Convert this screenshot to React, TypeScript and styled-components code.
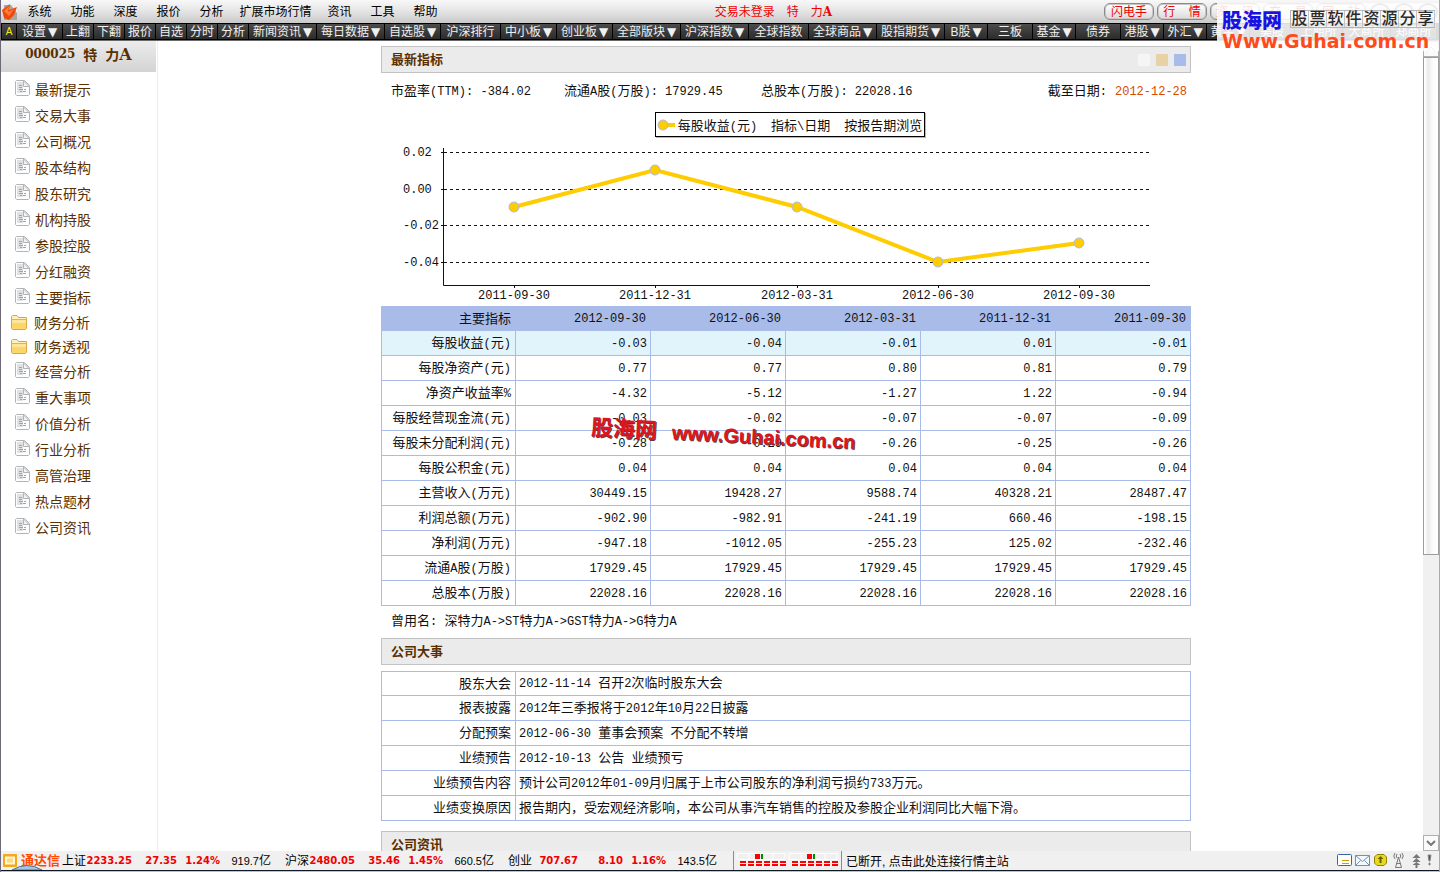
import React from 'react';
import styled, { createGlobalStyle } from 'styled-components';

const cjk = '"Liberation Sans", "Noto Sans CJK SC", sans-serif';
const mono = '"Liberation Mono", "Noto Sans CJK SC", monospace';

const GlobalStyle = createGlobalStyle`
  * { box-sizing: border-box; }
  body { margin: 0; background: #fff; font-family: ${cjk}; font-size: 12px; color: #111; }
  button { font: inherit; color: inherit; padding: 0; border: 0; background: none; cursor: pointer; white-space: nowrap; }
  a { color: inherit; text-decoration: none; }
`;

const Shell = styled.div`
  position: relative;
  display: flex;
  flex-direction: column;
  height: 100vh;
  overflow: hidden;
  border-left: 1px solid #6f6878;
  border-right: 1px solid #a9a9b4;
`;

/* ---------- menu bar ---------- */
const MenuBar = styled.header`
  flex: none;
  display: flex;
  align-items: center;
  height: 23px;
  padding-left: 1px;
  background: linear-gradient(#f8f8f8, #e4e4e4 50%, #c9c9c9);
`;
const Logo = styled.svg`
  flex: none;
  width: 16px;
  height: 18px;
`;
const Menu = styled.nav`
  display: flex;
`;
const MenuItem = styled.button<{ $wide?: boolean }>`
  width: ${(p) => (p.$wide ? 85 : 43)}px;
  line-height: 20px;
  color: #000;
`;
const Title = styled.div`
  flex: 1;
  display: flex;
  justify-content: center;
  gap: 12px;
  padding-right: 4px;
  line-height: 20px;
  color: #f00000;
`;
const SerifA = styled.span<{ $size: number }>`
  font-family: "DejaVu Serif", serif;
  font-weight: bold;
  font-size: ${(p) => p.$size}px;
`;
const PillRow = styled.div`
  display: flex;
  gap: 3px;
  margin-right: 4px;
`;
const Pill = styled.button`
  && {
    width: 50px;
    height: 17px;
    line-height: 14px;
    border: 1px solid #8a8a8a;
    border-radius: 6px;
    background: linear-gradient(#fff, #dadada);
    box-shadow: inset 0 0 0 1px #c8c8c8;
    color: #f00000;
    white-space: pre;
  }
`;
const RoundRow = styled.div`
  display: flex;
  gap: 4px;
  width: 69px;
`;
const Round = styled.button`
  && {
    width: 20px;
    height: 18px;
    border: 2px solid #777;
    border-radius: 50%;
    line-height: 12px;
  }
`;

/* ---------- tool bar ---------- */
const ToolBar = styled.nav`
  flex: none;
  display: flex;
  height: 18px;
  padding: 1px 0 1px 1px;
  background: #000;
  border-bottom: 1px solid #6a6a6a;
`;
const Tool = styled.button<{ $w: number; $hot?: boolean }>`
  && {
    flex: none;
    width: ${(p) => p.$w}px;
    height: 15px;
    line-height: 16px;
    border-right: 1px solid #000;
    background: linear-gradient(#4c4c4c, #2b2b2b);
    color: ${(p) => (p.$hot ? '#f4f000' : '#f0f0f0')};
    font-size: ${(p) => (p.$hot ? 10 : 12)}px;
  }
`;
const Arrow = styled.span`
  margin-left: 2px;
  font-family: "DejaVu Sans", sans-serif;
  line-height: 12px;
`;

/* ---------- body ---------- */
const Body = styled.div`
  flex: 1;
  min-height: 0;
  display: flex;
`;
const Side = styled.aside`
  flex: none;
  width: 157px;
  border-right: 1px solid #ececec;
`;
const SideHead = styled.h1`
  margin: 0 1px 5px 0;
  height: 31px;
  display: flex;
  justify-content: center;
  align-items: center;
  gap: 8px;
  padding-bottom: 6px;
  font-size: 14px;
  background: linear-gradient(#ececec, #d3d3d3);
  color: #5a3000;
`;
const Code = styled.span`
  font-family: "DejaVu Serif", serif;
  font-size: 12px;
`;
const NavLink = styled.a<{ $folder?: boolean }>`
  display: flex;
  align-items: center;
  gap: ${(p) => (p.$folder ? 6 : 5)}px;
  height: ${(p) => (p.$folder ? 24 : 26)}px;
  padding-left: ${(p) => (p.$folder ? 10 : 14)}px;
  font-size: 14px;
  line-height: 20px;
  color: #5a3000;
  svg { flex: none; margin-bottom: ${(p) => (p.$folder ? 0 : 4)}px; }
`;
const Main = styled.main`
  flex: 1;
  min-width: 0;
  overflow: hidden;
  padding: 5px 9px 0 0;
`;
const Report = styled.div`
  position: relative;
  max-width: 810px;
  margin: 0 auto;
  font-size: 13px;
`;
const Mono = styled.span`
  font-family: ${mono};
  font-size: 12px;
  white-space: pre;
`;
const SectionBar = styled.div`
  display: flex;
  align-items: center;
  justify-content: space-between;
  height: 27px;
  padding: 0 4px 0 9px;
  border: 1px solid #c3c3c3;
  background: #ebebeb;
`;
const SectionTitle = styled.h2`
  margin: 0;
  padding-bottom: 2px;
  font-size: 13px;
  color: #5a3000;
`;
const Swatches = styled.div`
  display: flex;
  gap: 6px;
`;
const Swatch = styled.button<{ $c: string }>`
  && {
    width: 12px;
    height: 12px;
    background: ${(p) => p.$c};
  }
`;
const Facts = styled.div`
  display: flex;
  align-items: baseline;
  height: 37px;
  padding: 8px 4px 0 10px;
  line-height: 20px;
`;
const Fact = styled.div<{ $w: number }>`
  width: ${(p) => p.$w}px;
  white-space: nowrap;
`;
const AsOf = styled.div`
  display: flex;
  align-items: baseline;
  gap: 8px;
  margin-left: auto;
`;
const DateText = styled.span`
  color: #d94a00;
`;
const Legend = styled.div`
  display: flex;
  align-items: center;
  gap: 14px;
  width: fit-content;
  height: 25px;
  margin: 2px auto 1px;
  padding: 0 2px 0 1px;
  position: relative;
  left: 4px;
  border: 1px solid #000;
  box-shadow: 1px 1px 0 #b8b8b8;
  white-space: nowrap;
`;
const LegendKey = styled.span`
  display: flex;
  align-items: center;
  gap: 3px;
`;
const Chart = styled.svg`
  display: block;
  width: 100%;
  height: 168px;
  text { font-family: ${mono}; font-size: 12px; fill: #111; }
`;
const Table = styled.table`
  width: 100%;
  border-collapse: collapse;
  table-layout: fixed;
  th, td {
    height: 25px;
    padding: 0 3px;
    border: 1px solid #a9bbe8;
    line-height: 20px;
    font-weight: normal;
    text-align: right;
    white-space: nowrap;
  }
  tr:first-child > th:first-child { width: 134px; }
  th:first-child { padding-right: 4px; }
  thead th { height: 24px; background: #a9bbe8; padding-right: 4px; }
`;
const Row = styled.tr<{ $active?: boolean }>`
  background: ${(p) => (p.$active ? '#e1f3fb' : '#fff')};
`;
const EventTable = styled(Table)`
  margin: 6px 0 10px;
  td { text-align: left; }
  tr:first-child > th, tr:first-child > td { height: 24px; }
`;
const Former = styled.p`
  margin: 0;
  padding: 0 10px;
  height: 32px;
  line-height: 29px;
`;
const CenterMark = styled.div`
  position: absolute;
  left: 211px;
  top: 363px;
  display: flex;
  align-items: baseline;
  gap: 15px;
  transform: rotate(3deg);
  transform-origin: left top;
  color: #e0141c;
  font-weight: bold;
  font-size: 20px;
  text-shadow: 1px 1px 0 #5a3a3a;
  white-space: nowrap;
  pointer-events: none;
`;
const MarkName = styled.span`
  font-size: 22px;
`;
const Scroll = styled.div`
  flex: none;
  display: flex;
  flex-direction: column;
  width: 16px;
  background: #f0f0f0;
`;
const ScrollButton = styled.button`
  && {
    height: 16px;
    border: 1px solid #b0b0b0;
    background: #fafafa;
    line-height: 0;
  }
`;
const Track = styled.div`
  flex: 1;
`;
const Thumb = styled.div`
  height: 64%;
  border: 1px solid #9c9c9c;
  background: linear-gradient(90deg, #fff 1px, #eaeaea 4px, #fbfbfb 9px, #fff);
`;

/* ---------- status bar ---------- */
const Status = styled.footer`
  flex: none;
  position: relative;
  display: flex;
  align-items: center;
  height: 19px;
  padding-left: 2px;
  background: #f0f0f0;
  color: #000;
`;
const Brand = styled.button`
  && {
    display: flex;
    align-items: center;
    gap: 4px;
    width: 59px;
    font-size: 13px;
    line-height: 16px;
    font-weight: bold;
    color: #ff4a00;
  }
`;
const Quote = styled.div`
  display: grid;
  grid-template-columns: 24px 46px 45px 43px 51px;
  width: 223px;
  align-items: center;
  text-align: right;
  line-height: 18px;
  white-space: nowrap;
`;
const Up = styled.b`
  font-family: "DejaVu Sans", sans-serif;
  font-size: 10px;
  color: #f00000;
`;
const Num = styled.span`
  font-size: 11px;
`;
const Bars = styled.svg`
  flex: none;
  width: 109px;
  height: 19px;
  border-left: 1px solid #8c8c8c;
  border-right: 1px solid #8c8c8c;
  margin-left: 2px;
`;
const Conn = styled.a`
  margin-left: 4px;
  white-space: nowrap;
`;
const Tray = styled.svg`
  margin-left: auto;
  width: 102px;
  height: 19px;
`;
const TaskEdge = styled.svg`
  flex: none;
  width: 100%;
  height: 2px;
  background: #b4c3dc;
  border-top: 1px solid #111820;
`;
const Orb = styled.svg`
  position: absolute;
  left: 11px;
  bottom: 0;
  width: 30px;
  height: 5px;
`;

/* ---------- corner watermark ---------- */
const Corner = styled.div`
  position: absolute;
  top: 3px;
  right: -1px;
  width: 223px;
  height: 48px;
  padding: 5px 5px 0;
  background: rgba(255, 255, 255, 0.86);
  pointer-events: none;
  white-space: nowrap;
`;
const CornerTop = styled.div`
  display: flex;
  align-items: center;
  gap: 8px;
  height: 22px;
  font-size: 20px;
  font-weight: 900;
  color: #1a12e0;
`;
const CornerTag = styled.span`
  display: flex;
  height: 18px;
  border: 1px solid #b5b5b5;
  border-right: 0;
  font-size: 16px;
  font-weight: 500;
  line-height: 16px;
  color: #2a2a2a;
  span { width: 18px; text-align: center; border-right: 1px solid #c4c4c4; }
`;
const CornerUrl = styled.div`
  font-family: "DejaVu Sans", sans-serif;
  font-size: 19px;
  line-height: 22px;
  font-weight: bold;
  color: #ff4a1c;
`;

/* Half-width runs are set in the monospaced face, Chinese runs in the body face. */
const Mixed = ({ t }: { t: string }) => (
  <>
    {t.split(/([\x20-\x7e]+)/).map((s, i) => (i % 2 ? <Mono key={i}>{s}</Mono> : s))}
  </>
);

const menus = ['系统', '功能', '深度', '报价', '分析', '扩展市场行情', '资讯', '工具', '帮助'];
const tools: [string, number, boolean?][] = [
  ['设置', 46, true], ['上翻', 31], ['下翻', 31], ['报价', 31], ['自选', 31], ['分时', 31], ['分析', 31],
  ['新闻资讯', 68, true], ['每日数据', 68, true], ['自选股', 56, true], ['沪深排行', 60], ['中小板', 56, true],
  ['创业板', 56, true], ['全部版块', 68, true], ['沪深指数', 68, true], ['全球指数', 60], ['全球商品', 68, true],
  ['股指期货', 68, true], ['B股', 43, true], ['三板', 45], ['基金', 43, true], ['债券', 45], ['港股', 43, true],
  ['外汇', 43, true], ['黄金', 43, true], ['美股', 45], ['上期所', 48], ['大商所', 48], ['郑商所', 46],
];
const nav = ['最新提示', '交易大事', '公司概况', '股本结构', '股东研究', '机构持股', '参股控股', '分红融资', '主要指标',
  '财务分析', '财务透视', '经营分析', '重大事项', '价值分析', '行业分析', '高管治理', '热点题材', '公司资讯'];
const folders = ['财务分析', '财务透视'];
const dates = ['2012-09-30', '2012-06-30', '2012-03-31', '2011-12-31', '2011-09-30'];
const rows: [string, string[]][] = [
  ['每股收益(元)', ['-0.03', '-0.04', '-0.01', '0.01', '-0.01']],
  ['每股净资产(元)', ['0.77', '0.77', '0.80', '0.81', '0.79']],
  ['净资产收益率%', ['-4.32', '-5.12', '-1.27', '1.22', '-0.94']],
  ['每股经营现金流(元)', ['-0.03', '-0.02', '-0.07', '-0.07', '-0.09']],
  ['每股未分配利润(元)', ['-0.28', '-0.29', '-0.26', '-0.25', '-0.26']],
  ['每股公积金(元)', ['0.04', '0.04', '0.04', '0.04', '0.04']],
  ['主营收入(万元)', ['30449.15', '19428.27', '9588.74', '40328.21', '28487.47']],
  ['利润总额(万元)', ['-902.90', '-982.91', '-241.19', '660.46', '-198.15']],
  ['净利润(万元)', ['-947.18', '-1012.05', '-255.23', '125.02', '-232.46']],
  ['流通A股(万股)', ['17929.45', '17929.45', '17929.45', '17929.45', '17929.45']],
  ['总股本(万股)', ['22028.16', '22028.16', '22028.16', '22028.16', '22028.16']],
];
const events: [string, string][] = [
  ['股东大会', '2012-11-14 召开2次临时股东大会'],
  ['报表披露', '2012年三季报将于2012年10月22日披露'],
  ['分配预案', '2012-06-30 董事会预案 不分配不转增'],
  ['业绩预告', '2012-10-13 公告 业绩预亏'],
  ['业绩预告内容', '预计公司2012年01-09月归属于上市公司股东的净利润亏损约733万元。'],
  ['业绩变换原因', '报告期内，受宏观经济影响，本公司从事汽车销售的控股及参股企业利润同比大幅下滑。'],
];
const quotes = [
  ['上证', '2233.25', '27.35', '1.24%', '919.7'],
  ['沪深', '2480.05', '35.46', '1.45%', '660.5'],
  ['创业', '707.67', '8.10', '1.16%', '143.5'],
];
const points: [number, number, string][] = [
  [133, 69, '2011-09-30'], [274, 32, '2011-12-31'], [416, 69, '2012-03-31'], [557, 124, '2012-06-30'], [698, 105, '2012-09-30'],
];
const grid: [number, string][] = [[14, '0.02'], [51, '0.00'], [87, '-0.02'], [124, '-0.04']];

const PageIcon = () => (
  <svg width="15" height="16" viewBox="0 0 15 16">
    <path d="M1.500.5h8l5 5v9l-1 1h-12l-1-1v-13z" fill="#fdfdfd" stroke="#b4b4b4" strokeLinejoin="round" />
    <path d="M2 2h6v11H2z" fill="#dfe2e5" />
    <path d="M8.500 1v5.500H14z" fill="#f4f4f4" stroke="#b4b4b4" />
    <path d="M4 5.500h3M4 7.500h3M4 9.500h4M9 9.500h2M5 11.500h2M8 11.500h3" stroke="#a2a2a2" />
  </svg>
);
const FolderIcon = () => (
  <svg width="17" height="16" viewBox="0 0 17 16">
    <path d="M.5 13.500V1.500l1-1H6l1.500 2h8v11l-1 1h-13z" fill="#fff0b8" stroke="#dba54a" />
    <path d="M1 5h14v9H1z" fill="#fcd66a" />
    <path d="M1 5h14v3H1z" fill="#fee79a" />
    <path d="M.5 4.500h15" stroke="#e2b260" />
  </svg>
);

export default function App() {
  return (
    <>
      <GlobalStyle />
      <Shell>
        <MenuBar>
          <Logo viewBox="0 0 16 18">
            <path d="M2 2h13v15H2z" fill="#aaa6a4" />
            <path d="M9 2h6v8z" fill="#f2eeec" />
            <path d="M0 7L8 1 7 7l8-3-3 8-5 5-5-2z" fill="#f0480c" />
            <path d="M2 8l5-5-1 6 6-3-5 7z" fill="#ff7c34" />
          </Logo>
          <Menu>
            {menus.map((m) => <MenuItem key={m} $wide={m.length > 2}>{m}</MenuItem>)}
          </Menu>
          <Title>
            <span>交易未登录</span>
            <span>特</span>
            <span>力<SerifA $size={12}>A</SerifA></span>
          </Title>
          <PillRow>
            {['闪电手', '行    情', '资    讯', '交    易', '网    站'].map((p) => <Pill key={p}>{p}</Pill>)}
          </PillRow>
          <RoundRow>
            <Round aria-label="minimize" /><Round aria-label="maximize" /><Round aria-label="close" />
          </RoundRow>
        </MenuBar>
        <ToolBar>
          <Tool $w={15} $hot>A</Tool>
          {tools.map(([t, w, arrow]) => (
            <Tool key={t} $w={w}>{t}{arrow && <Arrow>▼</Arrow>}</Tool>
          ))}
        </ToolBar>
        <Body>
          <Side>
            <SideHead><Code>000025</Code><span>特</span><span>力<SerifA $size={16}>A</SerifA></span></SideHead>
            <nav>
              {nav.map((n) => {
                const folder = folders.includes(n);
                return (
                  <NavLink key={n} href="#" $folder={folder}>
                    {folder ? <FolderIcon /> : <PageIcon />}{n}
                  </NavLink>
                );
              })}
            </nav>
          </Side>
          <Main>
            <Report>
              <SectionBar>
                <SectionTitle>最新指标</SectionTitle>
                <Swatches>
                  <Swatch $c="#f5f5f5" aria-label="white" />
                  <Swatch $c="#e9d1a6" aria-label="sand" />
                  <Swatch $c="#a9bbe8" aria-label="blue" />
                </Swatches>
              </SectionBar>
              <Facts>
                <Fact $w={173}><Mixed t="市盈率(TTM): -384.02" /></Fact>
                <Fact $w={197}><Mixed t="流通A股(万股): 17929.45" /></Fact>
                <Fact $w={160}><Mixed t="总股本(万股): 22028.16" /></Fact>
                <AsOf><span><Mixed t="截至日期:" /></span><DateText><Mixed t="2012-12-28" /></DateText></AsOf>
              </Facts>
              <Legend>
                <LegendKey>
                  <svg width="18" height="12" viewBox="0 0 18 12">
                    <path d="M6 6h12" stroke="#fc0" strokeWidth="4" />
                    <circle cx="6" cy="6" r="5" fill="#fc0" stroke="#a9bbe8" />
                  </svg>
                  <span><Mixed t="每股收益(元)" /></span>
                </LegendKey>
                <span><Mixed t="指标\日期" /></span>
                <span>按报告期浏览</span>
              </Legend>
              <Chart viewBox="0 0 810 168" preserveAspectRatio="xMinYMin meet">
                {grid.map(([y, label]) => (
                  <g key={label}>
                    <path d={`M63 ${y + 0.5}H769`} stroke="#111" strokeDasharray="3 3" shapeRendering="crispEdges" />
                    <path d={`M60 ${y + 0.5}h5`} stroke="#111" />
                    <text x="22" y={y + 4}>{label}</text>
                  </g>
                ))}
                <path d="M62.500 10v137.500H769" fill="none" stroke="#111" />
                <polyline points={points.map(([x, y]) => `${x},${y}`).join(' ')} fill="none" stroke="#fc0" strokeWidth="4" />
                {points.map(([x, y, d]) => (
                  <g key={d}>
                    <path d={`M${x + 0.5} 148v2`} stroke="#111" />
                    <circle cx={x} cy={y} r="5" fill="#fc0" stroke="#a9bbe8" />
                    <text x={x} y="161" textAnchor="middle">{d}</text>
                  </g>
                ))}
              </Chart>
              <Table>
                <thead>
                  <tr><th>主要指标</th>{dates.map((d) => <th key={d}><Mixed t={d} /></th>)}</tr>
                </thead>
                <tbody>
                  {rows.map(([label, values], i) => (
                    <Row key={label} $active={i === 0}>
                      <th scope="row"><Mixed t={label} /></th>
                      {values.map((v, j) => <td key={j}><Mixed t={v} /></td>)}
                    </Row>
                  ))}
                </tbody>
              </Table>
              <Former><Mixed t="曾用名: 深特力A->ST特力A->GST特力A->G特力A" /></Former>
              <SectionBar><SectionTitle>公司大事</SectionTitle></SectionBar>
              <EventTable>
                <tbody>
                  {events.map(([label, text]) => (
                    <tr key={label}><th scope="row">{label}</th><td><Mixed t={text} /></td></tr>
                  ))}
                </tbody>
              </EventTable>
              <SectionBar><SectionTitle>公司资讯</SectionTitle></SectionBar>
              <CenterMark><MarkName>股海网</MarkName><span>www.Guhai.com.cn</span></CenterMark>
            </Report>
          </Main>
          <Scroll>
            <ScrollButton aria-label="scroll up">
              <svg width="10" height="6"><path d="M1 5l4-4 4 4" fill="none" stroke="#888" /></svg>
            </ScrollButton>
            <Track><Thumb /></Track>
            <ScrollButton aria-label="scroll down">
              <svg width="10" height="6"><path d="M1 1l4 4 4-4" fill="none" stroke="#777" strokeWidth="2" /></svg>
            </ScrollButton>
          </Scroll>
        </Body>
        <Status>
          <Brand>
            <svg width="14" height="13" viewBox="0 0 14 13">
              <rect width="14" height="13" rx="1" fill="#f5a818" />
              <path d="M3 3.500h8v6H3z" fill="#ffd878" stroke="#fff6dc" strokeWidth="2" />
            </svg>
            通达信
          </Brand>
          {quotes.map(([name, price, diff, pct, vol]) => (
            <Quote key={name}>
              <span>{name}</span><Up>{price}</Up><Up>{diff}</Up><Up>{pct}</Up><span><Num>{vol}</Num>亿</span>
            </Quote>
          ))}
          <Bars viewBox="0 0 107 19">
            {[3, 55].map((x) => (
              <g key={x}>
                <path d={`M${x} 2.500h48v6h-48zM${x + 12} 2v6M${x + 36} 2v6`} fill="none" stroke="#fff" />
                <path d={`M${x + 18} 3h5v5h-5z`} fill="#f00" />
                <path d={`M${x + 24} 3h2v5h-2z`} fill="#008a00" />
                <path d={`M${x + 3} 11h46M${x + 3} 14h46`} stroke="#f00" strokeWidth="2" strokeDasharray="6 2" />
              </g>
            ))}
          </Bars>
          <Conn href="#">已断开, 点击此处连接行情主站</Conn>
          <Tray viewBox="0 0 102 19">
            <rect x=".5" y="3.500" width="14" height="11" rx="1" fill="#fff" stroke="#3c64a0" />
            <path d="M5 9.500h7M5 12.500h7" stroke="#c8a000" />
            <path d="M18.500 4.500h14v10h-14z" fill="#f4f8fc" stroke="#6e92b8" />
            <path d="M18.500 4.500l7 6 7-6M18.500 14.500l5-5M32.500 14.500l-5-5" fill="none" stroke="#6e92b8" />
            <path d="M40 3.500h7l2.500 2.500v6l-2.500 2.500h-7L37.500 12V6z" fill="#e8d820" stroke="#908400" />
            <path d="M43.500 5l3 3h-2v4h-2V8h-2z" fill="#6c6400" />
            <path d="M58 2q-2.500 3 0 6M60 3q-1.500 2 0 4M65 2q2.500 3 0 6M63 3q1.500 2 0 4M61.500 6l-3 10.500h6zM59.500 12.500h4" fill="none" stroke="#777" />
            <path d="M79.500 3l4 4h-8zM79.500 7l4 4h-8zM79.500 11l4 3h-8zM78.500 14h2v3h-2z" fill="#777" />
            <path d="M91 4h3l-1 6h-1zM92 12h1v2h-1z" fill="#555" stroke="#888" />
          </Tray>
          <Orb viewBox="0 0 30 5" preserveAspectRatio="none">
            <path d="M0 5Q15-4 30 5z" fill="#a9c4de" stroke="#54708c" />
          </Orb>
        </Status>
        <TaskEdge />
        <Corner>
          <CornerTop>
            股海网
            <CornerTag>{'股票软件资源分享'.split('').map((c) => <span key={c}>{c}</span>)}</CornerTag>
          </CornerTop>
          <CornerUrl>Www.Guhai.com.cn</CornerUrl>
        </Corner>
      </Shell>
    </>
  );
}
